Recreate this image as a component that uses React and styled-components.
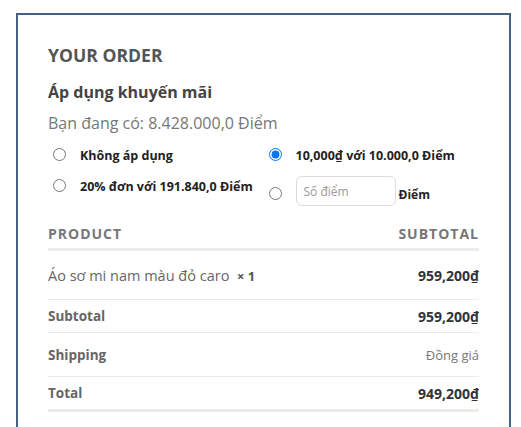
import React from "react";
import styled, { createGlobalStyle } from "styled-components";

const Global = createGlobalStyle`
  html, body { margin: 0; padding: 0; background: #fff; }
  body { font-family: "Open Sans", "Noto Sans", sans-serif; }
  * { box-sizing: border-box; }
`;

const Card = styled.div`
  width: 495px;
  margin: 13px 0 0 16px;
  border: 2px solid #456180;
  padding: 27px 30px 60px 30px;
`;

const Title = styled.h3`
  margin: 0;
  font-size: 17.6px;
  line-height: 27px;
  font-weight: 700;
  text-transform: uppercase;
  color: #555;
`;

const SubTitle = styled.h4`
  margin: 11px 0 0;
  font-size: 16px;
  line-height: 24px;
  font-weight: 700;
  color: #444;
`;

const Points = styled.p`
  margin: 7px 0 0;
  font-size: 16px;
  line-height: 24px;
  color: #777;
`;

const Options = styled.div`
  margin-top: 12px;
  display: grid;
  grid-template-columns: 1fr 1fr;
  row-gap: 11px;
`;

const Option = styled.label`
  display: flex;
  align-items: ${(p) => (p.$end ? "flex-end" : "flex-start")};
  padding-top: ${(p) => p.$pad || 0}px;
  font-size: 12.5px;
  line-height: 18px;
  font-weight: 700;
  color: #222;
`;

const Radio = styled.input.attrs({ type: "radio", name: "promo" })`
  width: 13px;
  height: 13px;
  margin: ${(p) => (p.$end ? "0 14px 6px 5px" : "1px 14px 0 5px")};
  flex: none;
`;

const PointInput = styled.input.attrs({ type: "text" })`
  width: 100px;
  height: 30px;
  border: 1px solid #dcdcdc;
  border-radius: 6px;
  padding: 0 7px;
  font-family: "Open Sans", sans-serif;
  font-size: 12px;
  color: #333;
  outline: none;
  &::placeholder { color: #9a9a9a; }
`;

const Unit = styled.span`
  margin: 0 0 2px 3px;
  font-size: 12px;
`;

const Table = styled.div`
  margin-top: 18px;
`;

const Row = styled.div`
  display: flex;
  justify-content: space-between;
  align-items: ${(p) => (p.$head ? "flex-start" : "center")};
  height: ${(p) => p.$h}px;
  box-sizing: content-box;
  border-bottom: ${(p) => p.$b}px solid #ebebeb;
`;

const HeadCell = styled.span`
  font-size: 14px;
  line-height: 20px;
  font-weight: 700;
  letter-spacing: 1px;
  text-transform: uppercase;
  color: #777;
`;

const ProductName = styled.span`
  font-size: 14.5px;
  color: #666;
`;

const Qty = styled.strong`
  font-size: 13px;
  color: #555;
`;

const Label = styled.span`
  font-size: 13.5px;
  font-weight: 700;
  color: #666;
`;

const Amount = styled.span`
  font-size: 14px;
  font-weight: 700;
  color: #333;
`;

const Note = styled.span`
  font-size: 13px;
  color: #777;
`;

export default function App() {
  return (
    <>
      <Global />
      <Card>
        <Title>Your order</Title>
        <SubTitle>Áp dụng khuyến mãi</SubTitle>
        <Points>Bạn đang có: 8.428.000,0 Điểm</Points>
        <Options>
          <Option>
            <Radio />
            <span>Không áp dụng</span>
          </Option>
          <Option>
            <Radio defaultChecked />
            <span>10,000₫ với 10.000,0 Điểm</span>
          </Option>
          <Option $pad={2}>
            <Radio />
            <span>20% đơn với 191.840,0 Điểm</span>
          </Option>
          <Option $end>
            <Radio $end />
            <PointInput placeholder="Số điểm" />
            <Unit>Điểm</Unit>
          </Option>
        </Options>
        <Table>
          <Row $head $h={24} $b={3}>
            <HeadCell>Product</HeadCell>
            <HeadCell>Subtotal</HeadCell>
          </Row>
          <Row $h={48} $b={1}>
            <ProductName>
              Áo sơ mi nam màu đỏ caro&nbsp; <Qty>× 1</Qty>
            </ProductName>
            <Amount>959,200₫</Amount>
          </Row>
          <Row $h={32} $b={1}>
            <Label>Subtotal</Label>
            <Amount>959,200₫</Amount>
          </Row>
          <Row $h={43} $b={1}>
            <Label>Shipping</Label>
            <Note>Đồng giá</Note>
          </Row>
          <Row $h={32} $b={3}>
            <Label>Total</Label>
            <Amount>949,200₫</Amount>
          </Row>
        </Table>
      </Card>
    </>
  );
}
